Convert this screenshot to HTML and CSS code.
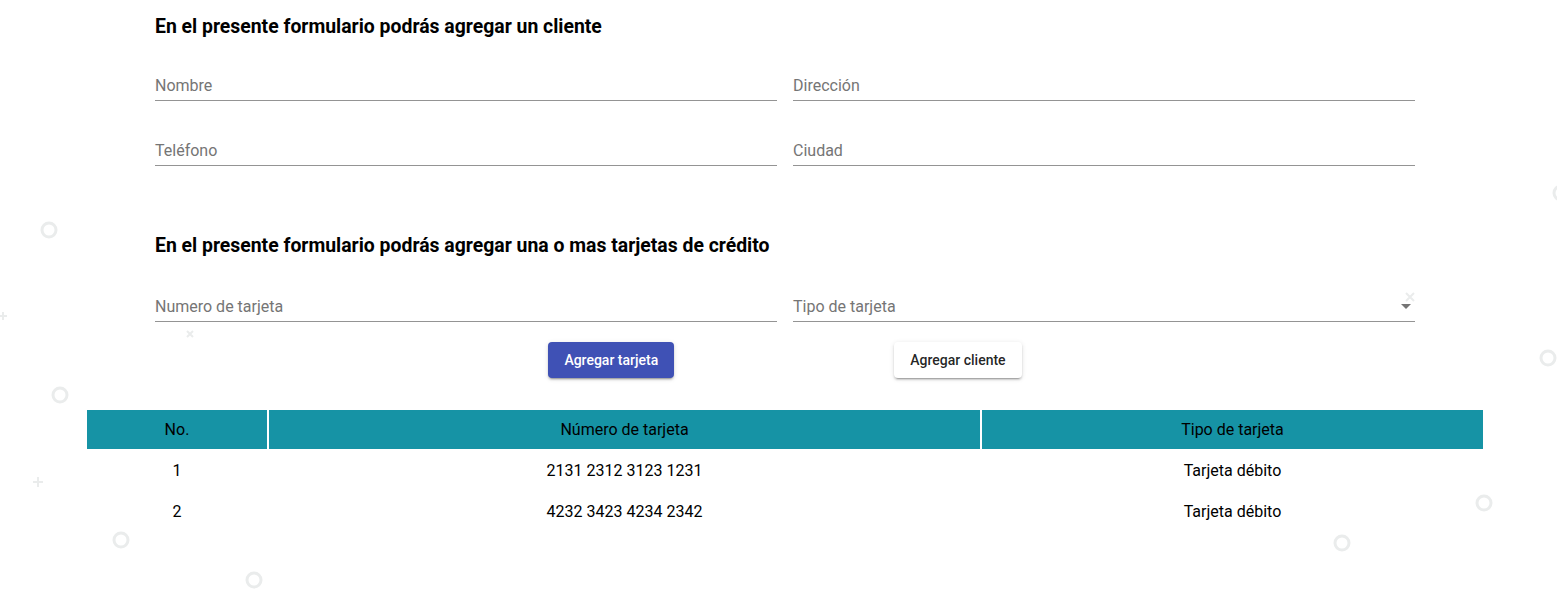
FILE: index.html
```html
<!DOCTYPE html>
<html lang="es">
<head>
<meta charset="utf-8">
<title>Agregar cliente</title>
<link rel="stylesheet" href="styles.css">
</head>
<body>
<svg class="decor" width="1557" height="599" viewBox="0 0 1557 599" aria-hidden="true">
  <g fill="none" stroke="#eaecec" stroke-width="3">
    <circle cx="49" cy="230" r="7"/>
    <circle cx="60" cy="395" r="7"/>
    <circle cx="121" cy="540" r="7"/>
    <circle cx="254" cy="580" r="7"/>
    <circle cx="1561" cy="193" r="7"/>
    <circle cx="1548" cy="358" r="7"/>
    <circle cx="1484" cy="503" r="7"/>
    <circle cx="1342" cy="543" r="7"/>
  </g>
  <g stroke="#eaecec" stroke-width="2">
    <path d="M0 316h7M3 312v8"/>
    <path d="M33 482h10M38 477v10"/>
    <path d="M187 331l6 6M193 331l-6 6"/>
    <path d="M1406 293l8 8M1414 293l-8 8"/>
  </g>
</svg>

<main class="page">
  <section class="form">
    <h3 class="title">En el presente formulario podrás agregar un cliente</h3>
    <div class="grid">
      <div class="field"><span class="label">Nombre</span></div>
      <div class="field"><span class="label">Dirección</span></div>
      <div class="field"><span class="label">Teléfono</span></div>
      <div class="field"><span class="label">Ciudad</span></div>
    </div>

    <h3 class="title title-2">En el presente formulario podrás agregar una o mas tarjetas de crédito</h3>
    <div class="grid">
      <div class="field"><span class="label">Numero de tarjeta</span></div>
      <div class="field select"><span class="label">Tipo de tarjeta</span><span class="arrow"></span></div>
    </div>
  </section>

  <div class="actions">
    <button class="btn btn-primary">Agregar tarjeta</button>
    <button class="btn btn-plain">Agregar cliente</button>
  </div>

  <table class="cards">
    <thead>
      <tr><th class="c1">No.</th><th class="c2">Número de tarjeta</th><th class="c3">Tipo de tarjeta</th></tr>
    </thead>
    <tbody>
      <tr><td>1</td><td>2131 2312 3123 1231</td><td>Tarjeta débito</td></tr>
      <tr><td>2</td><td>4232 3423 4234 2342</td><td>Tarjeta débito</td></tr>
    </tbody>
  </table>
</main>
</body>
</html>
```

FILE: styles.css
```css
* { box-sizing: border-box; }

html, body {
  margin: 0;
  padding: 0;
  background: #fff;
  font-family: Roboto, "Liberation Sans", sans-serif;
  color: #000;
  overflow: hidden;
}

body {
  position: relative;
  width: 1557px;
  height: 599px;
}

.decor {
  position: absolute;
  left: 0;
  top: 0;
  z-index: 0;
}

.page {
  position: relative;
  z-index: 1;
  padding-top: 16px;
}

.form {
  margin-left: 155px;
  width: 1260px;
}

.title {
  margin: 0;
  font-size: 19.4px;
  line-height: 22px;
  font-weight: 700;
  color: #000;
}

.title-2 {
  margin-top: 69px;
}

.grid {
  display: grid;
  grid-template-columns: 622px 622px;
  column-gap: 16px;
  row-gap: 39px;
  margin-top: 37px;
}

.title-2 + .grid {
  margin-top: 39px;
}

.field {
  position: relative;
  height: 26px;
  padding-top: 1px;
  border-bottom: 1px solid #949494;
}

.label {
  display: block;
  font-size: 16px;
  line-height: 20px;
  color: #757575;
}

.select .arrow {
  position: absolute;
  right: 4px;
  top: 8px;
  width: 0;
  height: 0;
  border-left: 5px solid transparent;
  border-right: 5px solid transparent;
  border-top: 5px solid #757575;
}

.actions {
  display: flex;
  justify-content: center;
  gap: 220px;
  margin-left: 13px;
  margin-top: 20px;
}

.btn {
  height: 36px;
  padding: 0 16px;
  border: none;
  border-radius: 4px;
  font-family: Roboto, "Liberation Sans", sans-serif;
  font-size: 14px;
  font-weight: 500;
  line-height: 36px;
  box-shadow: 0 3px 1px -2px rgba(0,0,0,.2), 0 2px 2px 0 rgba(0,0,0,.14), 0 1px 5px 0 rgba(0,0,0,.12);
}

.btn-primary {
  background: #3f51b5;
  color: #fff;
}

.btn-plain {
  background: #fff;
  color: rgba(0,0,0,.87);
}

.cards {
  margin-top: 32px;
  margin-left: 85px;
  width: 1400px;
  border-collapse: separate;
  border-spacing: 2px 0;
  font-size: 16px;
}

.cards th {
  height: 39px;
  background: #1693a5;
  font-weight: 400;
  color: #000;
  padding: 0;
}

.cards th.c1 { width: 180px; }
.cards th.c2 { width: 711px; }
.cards th.c3 { width: 501px; }

.cards td {
  height: 41px;
  text-align: center;
  padding: 2px 0 0;
  color: #000;
}
```
